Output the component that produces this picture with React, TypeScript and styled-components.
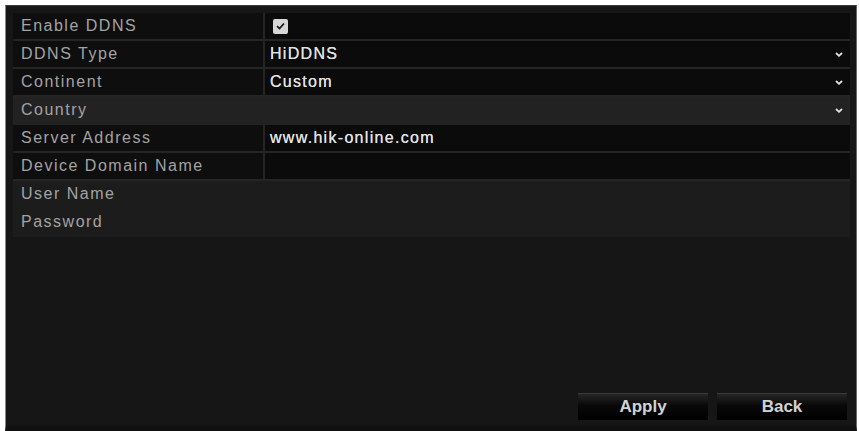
import React from 'react';
import styled, { createGlobalStyle } from 'styled-components';

const GlobalStyle = createGlobalStyle`
  html, body {
    margin: 0;
    padding: 0;
    background: #ffffff;
  }
  body {
    font-family: "Liberation Sans", Arial, sans-serif;
  }
`;

type Variant = 'dark' | 'muted' | 'plain';

interface FieldRow {
  label: string;
  value?: string;
  kind?: 'check' | 'select';
  variant: Variant;
}

const rows: FieldRow[] = [
  { label: 'Enable DDNS', kind: 'check', variant: 'dark' },
  { label: 'DDNS Type', value: 'HiDDNS', kind: 'select', variant: 'dark' },
  { label: 'Continent', value: 'Custom', kind: 'select', variant: 'dark' },
  { label: 'Country', kind: 'select', variant: 'muted' },
  { label: 'Server Address', value: 'www.hik-online.com', variant: 'dark' },
  { label: 'Device Domain Name', variant: 'dark' },
  { label: 'User Name', variant: 'plain' },
  { label: 'Password', variant: 'plain' },
];

const lineColor: Record<Variant, string> = {
  dark: '#252525',
  muted: '#222222',
  plain: '#1c1c1c',
};

const labelColor: Record<Variant, string> = {
  dark: '#0e0e0e',
  muted: '#222222',
  plain: '#1c1c1c',
};

const valueColor: Record<Variant, string> = {
  dark: '#0b0b0b',
  muted: '#222222',
  plain: '#1c1c1c',
};

const Screen = styled.div`
  margin: 5px 0 0 5px;
  width: 852px;
  height: 426px;
  box-sizing: border-box;
  background: #161616;
  border-left: 1px solid #8a8a8a;
  border-top: 1px solid #3c3c3c;
  border-right: 1px solid #6a6a6a;
  border-bottom: 5px solid #101010;
  padding: 7px 6px 6px 7px;
  display: flex;
  flex-direction: column;
`;

const Table = styled.div`
  display: flex;
  flex-direction: column;
  width: 837px;
`;

const Row = styled.div<{ $variant: Variant }>`
  display: grid;
  grid-template-columns: 250px 1fr;
  column-gap: 2px;
  height: 26px;
  background: ${p => lineColor[p.$variant]};
  border-bottom: 2px solid ${p => lineColor[p.$variant]};
`;

const Label = styled.div<{ $variant: Variant }>`
  background: ${p => labelColor[p.$variant]};
  color: #a3a3a3;
  font-size: 16px;
  letter-spacing: 1.5px;
  line-height: 26px;
  padding-left: 8px;
  white-space: nowrap;
`;

const Value = styled.div<{ $variant: Variant }>`
  background: ${p => valueColor[p.$variant]};
  color: #e2e2e2;
  font-size: 16px;
  letter-spacing: 1.3px;
  line-height: 26px;
  padding: 0 7px 0 5px;
  display: flex;
  align-items: center;
  justify-content: space-between;
  white-space: nowrap;
  text-shadow: 0 0 0.4px #e2e2e2;
`;

const CheckBox = styled.span`
  width: 15px;
  height: 15px;
  margin-left: 3px;
  border-radius: 2px;
  background: #d6d6d6;
  display: inline-flex;
  align-items: center;
  justify-content: center;
`;

const Chevron = styled.svg`
  width: 8px;
  height: 5px;
  flex: none;
`;

const Footer = styled.div`
  margin-top: auto;
  display: flex;
  justify-content: flex-end;
  gap: 9px;
  padding-right: 3px;
`;

const Button = styled.button`
  width: 130px;
  height: 27px;
  border: none;
  border-top: 1px solid #3a3a3a;
  background: linear-gradient(#262626 0%, #080808 45%, #000000 100%);
  color: #d2d2d2;
  font-family: "Liberation Sans", Arial, sans-serif;
  font-size: 17px;
  font-weight: 700;
  padding: 0;
  cursor: pointer;
`;

function ValueContent({ row }: { row: FieldRow }) {
  return (
    <>
      {row.kind === 'check' ? (
        <CheckBox>
          <svg width="9" height="8" viewBox="0 0 9 8">
            <path d="M1 4.2 L3.5 6.5 L8 1.5" fill="none" stroke="#1a1a1a" strokeWidth="1.8" />
          </svg>
        </CheckBox>
      ) : (
        <span>{row.value ?? ''}</span>
      )}
      {row.kind === 'select' && (
        <Chevron viewBox="0 0 8 5">
          <path d="M1 1 L4 3.8 L7 1" fill="none" stroke="#e0e0e0" strokeWidth="1.8" />
        </Chevron>
      )}
    </>
  );
}

export default function App() {
  return (
    <>
      <GlobalStyle />
      <Screen>
        <Table>
          {rows.map(row => (
            <Row key={row.label} $variant={row.variant}>
              <Label $variant={row.variant}>{row.label}</Label>
              <Value $variant={row.variant}>
                <ValueContent row={row} />
              </Value>
            </Row>
          ))}
        </Table>
        <Footer>
          <Button>Apply</Button>
          <Button>Back</Button>
        </Footer>
      </Screen>
    </>
  );
}
